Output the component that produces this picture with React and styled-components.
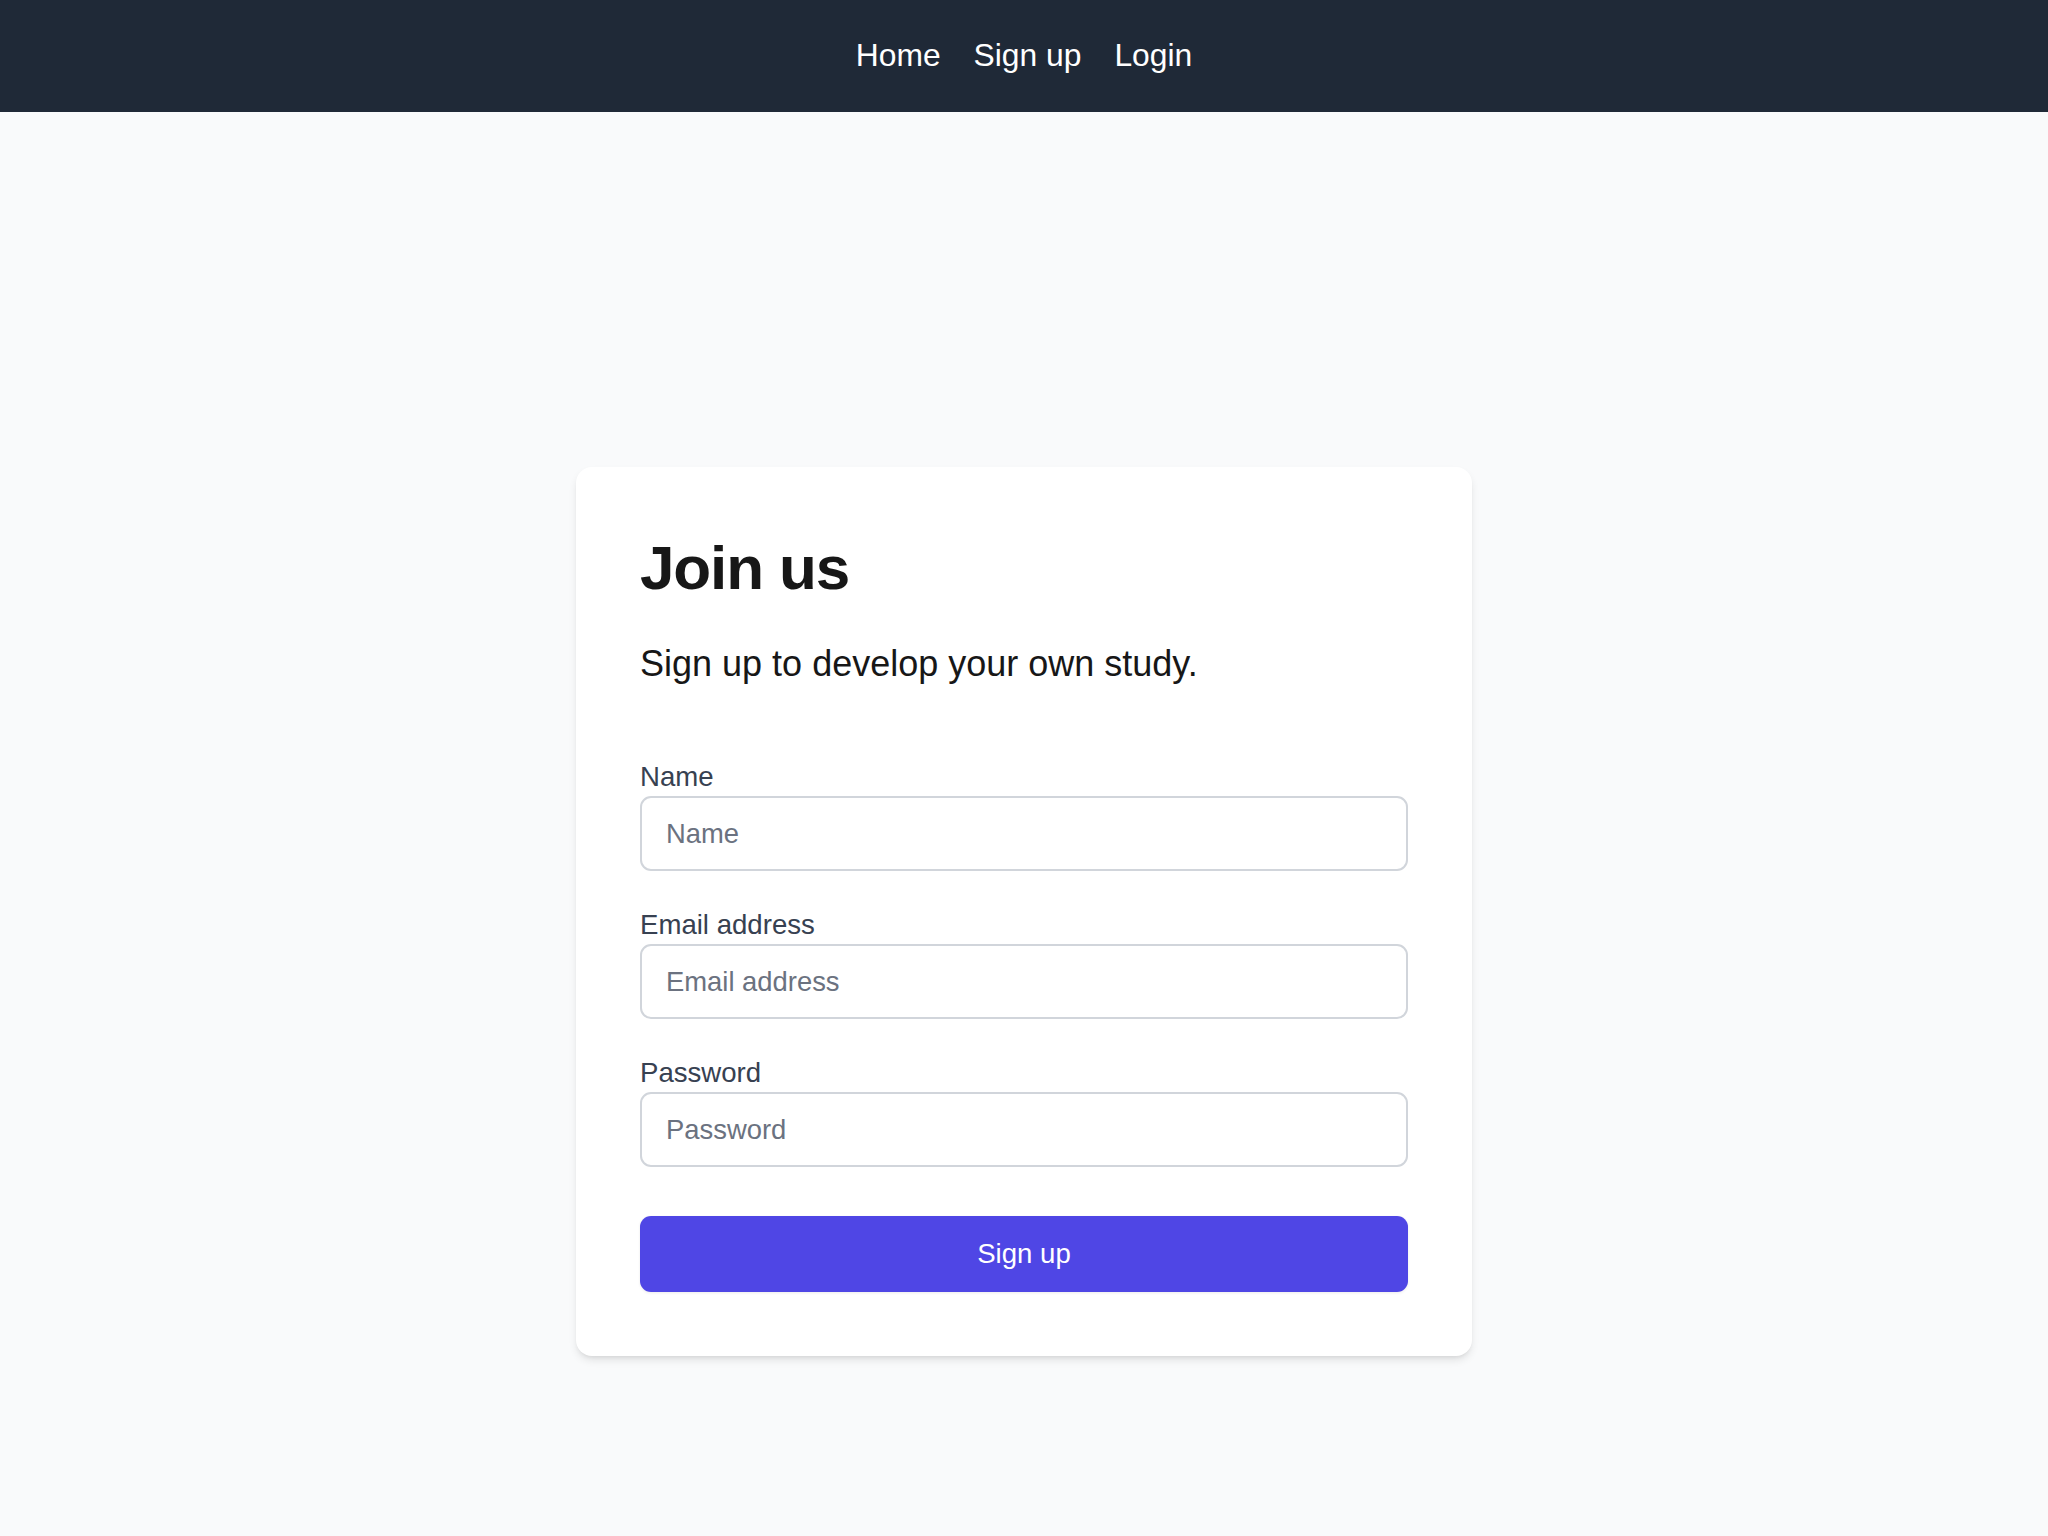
import styled, { createGlobalStyle } from "styled-components";

const GlobalStyle = createGlobalStyle`
  * {
    box-sizing: border-box;
  }
  body {
    margin: 0;
    background-color: #f9fafb;
    font-family: "Liberation Sans", Arial, sans-serif;
  }
`;

export default function App() {
  function handleSubmit(event) {
    event.preventDefault();
  }
  return (
    <>
      <GlobalStyle />
      <NavBar>
        <NavLink href="#">Home</NavLink>
        <NavLink href="#">Sign up</NavLink>
        <NavLink href="#">Login</NavLink>
      </NavBar>
      <Main>
        <Card>
          <Title>Join us</Title>
          <Subtitle>Sign up to develop your own study.</Subtitle>
          <Form onSubmit={handleSubmit}>
            <Field>
              <Label htmlFor="name">Name</Label>
              <TextInput id="name" name="name" type="text" placeholder="Name" />
            </Field>
            <Field>
              <Label htmlFor="email">Email address</Label>
              <TextInput
                id="email"
                name="email"
                type="email"
                placeholder="Email address"
              />
            </Field>
            <Field>
              <Label htmlFor="password">Password</Label>
              <TextInput
                id="password"
                name="password"
                type="password"
                placeholder="Password"
              />
            </Field>
            <Button type="submit">Sign up</Button>
          </Form>
        </Card>
      </Main>
    </>
  );
}

const NavBar = styled.nav`
  height: 112px;
  background-color: #1f2937;
  display: flex;
  justify-content: center;
  align-items: center;
  gap: 33px;
`;
const NavLink = styled.a`
  color: #ffffff;
  text-decoration: none;
  font-size: 31.8px;
  line-height: normal;
  margin-top: -2px;
`;
const Main = styled.main`
  display: flex;
  justify-content: center;
  padding: 355px 0 180px;
`;
const Card = styled.div`
  width: 896px;
  background-color: #ffffff;
  border-radius: 16px;
  padding: 64px;
  box-shadow: 0 5px 8px -1px rgba(0, 0, 0, 0.1),
    0 3px 5px -3px rgba(0, 0, 0, 0.1);
`;
const Title = styled.h1`
  margin: 0;
  font-size: 62px;
  line-height: 1.2;
  font-weight: 700;
  letter-spacing: -0.018em;
  color: #171717;
`;
const Subtitle = styled.p`
  margin: 34px 0 0;
  font-size: 36px;
  line-height: 50px;
  color: #171717;
`;
const Form = styled.form`
  display: flex;
  flex-direction: column;
  gap: 35px;
  margin-top: 69px;
`;
const Field = styled.div`
  display: flex;
  flex-direction: column;
`;
const Label = styled.label`
  font-size: 27.6px;
  line-height: 38px;
  color: #374151;
`;
const TextInput = styled.input`
  height: 75px;
  width: 100%;
  border: 2px solid #d1d5db;
  border-radius: 11px;
  padding: 0 24px;
  font-family: "Liberation Sans", Arial, sans-serif;
  font-size: 27.4px;
  color: #111827;
  background-color: #ffffff;
  outline: none;
  &::placeholder {
    color: #6b7280;
  }
`;
const Button = styled.button`
  margin-top: 14px;
  height: 76px;
  width: 100%;
  border: none;
  border-radius: 11px;
  background-color: #4f46e5;
  color: #ffffff;
  font-family: "Liberation Sans", Arial, sans-serif;
  font-size: 27.6px;
  cursor: pointer;
  box-shadow: 0 1px 3px rgba(0, 0, 0, 0.08);
`;
